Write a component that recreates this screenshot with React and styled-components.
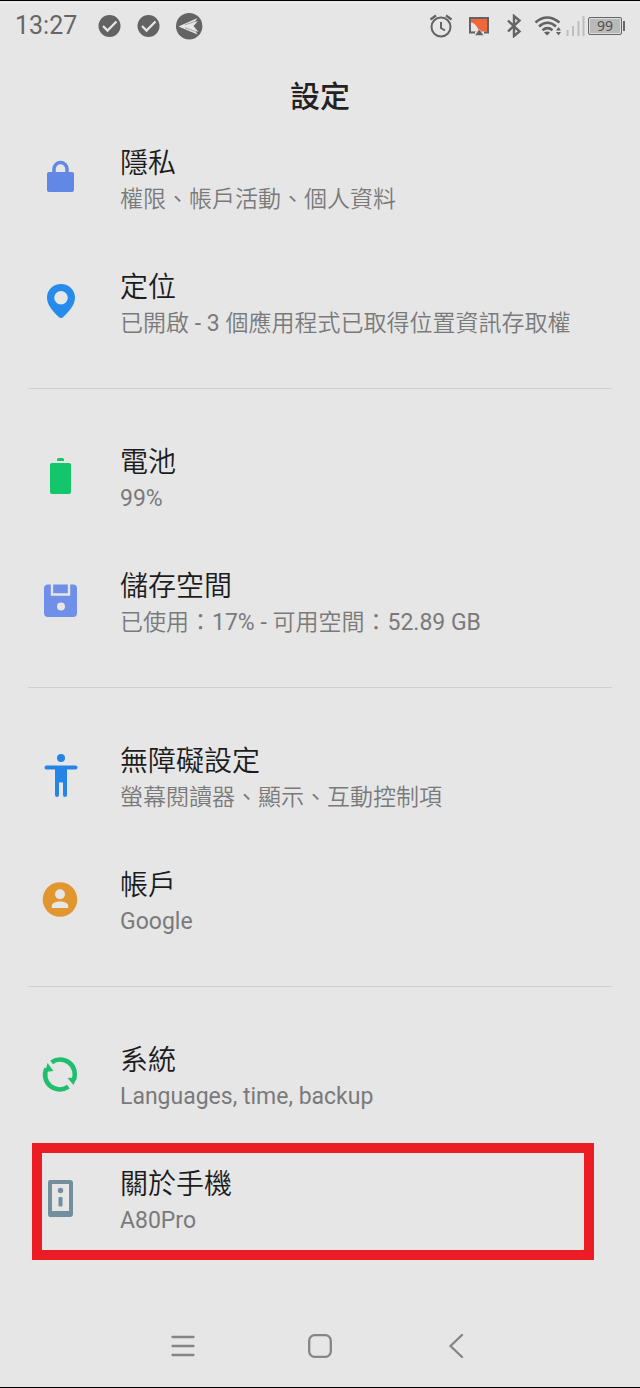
import React from "react";
import styled, { createGlobalStyle } from "styled-components";

const GlobalStyle = createGlobalStyle`
  * { box-sizing: border-box; }
  body {
    margin: 0;
    background: #e6e6e6;
    font-family: Roboto, "Noto Sans CJK TC", sans-serif;
  }
  svg { display: block; }
`;

const Screen = styled.div`
  min-height: 100vh;
  display: flex;
  flex-direction: column;
  background: #e6e6e6;
  border-top: 1px solid #000;
  border-bottom: 1px solid #000;
`;

const StatusBar = styled.header`
  height: 50px;
  padding: 0 15px;
  display: flex;
  align-items: center;
  justify-content: space-between;
  color: #666;
  box-shadow: inset 0 4px #eaeaea;
`;

const StatusGroup = styled.div`
  display: flex;
  align-items: center;
`;

const Clock = styled.time`
  width: 83px;
  font-size: 25px;
  line-height: 30px;
`;

const StatusIcon = styled.svg`
  width: ${(p) => p.$w}px;
  height: ${(p) => p.$h || p.$w}px;
  margin-right: ${(p) => p.$gap || 0}px;
`;

const BatteryLevel = styled.div`
  width: 34px;
  height: 18px;
  border: 1px solid #666;
  border-radius: 2px;
  background: #b9b9b9;
  box-shadow: inset 0 0 0 1px #dcdcdc;
  color: #505050;
  font-family: "Noto Sans", sans-serif;
  font-size: 14px;
  line-height: 16px;
  text-align: center;
`;

const BatteryTip = styled.span`
  width: 2px;
  height: 10px;
  margin-left: 1px;
  background: #666;
`;

const PageTitle = styled.h1`
  margin: 0;
  height: 64px;
  padding-top: 24px;
  color: #222;
  font-size: 30px;
  line-height: 44px;
  font-weight: 500;
  text-align: center;
`;

const Main = styled.main`
  flex: 1;
`;

const Group = styled.ul`
  list-style: none;
  margin: 0;
  padding: 0;

  & + & {
    margin-top: 25px;
    padding-top: 26px;
    position: relative;
  }

  & + &::before {
    content: "";
    position: absolute;
    top: 0;
    left: 28px;
    right: 28px;
    border-top: 1px solid #cfcfcf;
  }
`;

const Item = styled.li`
  position: relative;

  &::after {
    content: "";
    display: ${(p) => (p.$highlighted ? "block" : "none")};
    position: absolute;
    inset: 7px 46px 0 32px;
    border: 10px solid #eb1c24;
    pointer-events: none;
  }
`;

const ItemLink = styled.a`
  height: 124px;
  display: grid;
  grid-template-columns: 40px 1fr;
  column-gap: 40px;
  align-items: center;
  padding: 0 20px 0 40px;
  text-decoration: none;
  font-family: Roboto, "Noto Sans CJK TC DemiLight", "Noto Sans CJK TC", sans-serif;
`;

const ItemIcon = styled.svg`
  width: 40px;
  height: 48px;
`;

const ItemText = styled.span`
  padding-top: 8px;
`;

const Label = styled.span`
  display: block;
  color: #1c1c1c;
  font-size: 28px;
  line-height: 38px;
`;

const Summary = styled.span`
  display: block;
  color: #7a7a7a;
  font-size: 23px;
  line-height: 34px;
`;

const NavBar = styled.nav`
  height: 82px;
  padding: 0 115px;
  display: flex;
  align-items: center;
  justify-content: space-between;
`;

const NavButton = styled.button`
  width: 136px;
  height: 48px;
  padding: 0;
  border: 0;
  background: none;
  color: #858585;
  display: flex;
  align-items: center;
  justify-content: center;
`;

const bg = "#e6e6e6";

const icons = {
  lock: (
    <>
      <rect x="7" y="19" width="27" height="20" rx="2" fill="#6288e6" />
      <path d="M14 20v-4a6.500 6.500 0 0 1 13 0V20" fill="none" stroke="#6288e6" strokeWidth="3.500" />
    </>
  ),
  pin: (
    <path
      fill="#268bea"
      fillRule="evenodd"
      d="M21 7C13 7 7 13 7 20.500C7 29 14 35 18.500 39.800Q21 42.200 23.500 39.800C28 35 35 29 35 20.500C35 13 29 7 21 7ZM21 14a6.800 6.800 0 1 1 0 13.600a6.800 6.800 0 0 1 0-13.600Z"
    />
  ),
  battery: (
    <g fill="#14c66b">
      <path d="M17 9V7.500Q17 6 18.500 6h4Q24 6 24 7.500V9Z" />
      <rect x="10" y="11" width="21" height="31" rx="2" />
    </g>
  ),
  disk: (
    <>
      <rect x="4" y="8.500" width="33" height="32.500" rx="4" fill="#6f8fe8" />
      <path d="M12 8v10.500h17V8" fill="none" stroke={bg} strokeWidth="2.400" />
      <circle cx="21" cy="30.500" r="4" fill={bg} />
    </>
  ),
  person: (
    <g fill="#2585e6">
      <circle cx="21" cy="7" r="4" />
      <path d="M6.500 14.500h29a2 2 0 0 1 0 4H27V44a2 2 0 0 1-4 0V31.500h-4V44a2 2 0 0 1-4 0V18.500H6.500a2 2 0 0 1 0-4Z" />
    </g>
  ),
  account: (
    <>
      <circle cx="20" cy="24.500" r="17.300" fill="#e2962f" />
      <circle cx="20" cy="19.200" r="5" fill={bg} />
      <path d="M11.700 33v-2c0-6 16.600-6 16.600 0v2Z" fill={bg} />
    </>
  ),
  sync: (
    <>
      <path
        d="M11.600 12.300A14.700 14.700 0 0 1 33.900 29.500M28.400 36.700A14.700 14.700 0 0 1 6.500 18.500"
        fill="none"
        stroke="#20bf70"
        strokeWidth="4.600"
      />
      <path d="M7.500 13L13.500 21L5 22ZM27.500 28L37 27.500L33.500 35Z" fill="#20bf70" />
    </>
  ),
  phone: (
    <>
      <path
        fill="#738f9e"
        fillRule="evenodd"
        d="M10 6h20q3 0 3 3v31q0 3-3 3H10q-2 0-2-3V9q0-3 2-3ZM12 10v27h17V10Z"
      />
      <circle cx="20.500" cy="16.500" r="2.700" fill="#738f9e" />
      <rect x="18.500" y="23" width="4" height="9.500" rx="1" fill="#738f9e" />
    </>
  ),
};

const groups = [
  [
    { icon: "lock", label: "隱私", summary: "權限、帳戶活動、個人資料" },
    { icon: "pin", label: "定位", summary: "已開啟 - 3 個應用程式已取得位置資訊存取權" },
  ],
  [
    { icon: "battery", label: "電池", summary: "99%" },
    { icon: "disk", label: "儲存空間", summary: "已使用：17% - 可用空間：52.89 GB" },
  ],
  [
    { icon: "person", label: "無障礙設定", summary: "螢幕閱讀器、顯示、互動控制項" },
    { icon: "account", label: "帳戶", summary: "Google" },
  ],
  [
    { icon: "sync", label: "系統", summary: "Languages, time, backup" },
    { icon: "phone", label: "關於手機", summary: "A80Pro", highlighted: true },
  ],
];

function CheckBadge() {
  return (
    <StatusIcon $w={23} $gap={16} viewBox="0 0 23 23" aria-hidden="true">
      <circle cx="11.500" cy="11" r="11" fill="#636363" />
      <path d="M5 11l4.500 4.500L18.500 6.500" fill="none" stroke={bg} strokeWidth="2.300" />
    </StatusIcon>
  );
}

function Status() {
  return (
    <StatusBar>
      <StatusGroup>
        <Clock>13:27</Clock>
        <CheckBadge />
        <CheckBadge />
        <StatusIcon $w={27} viewBox="0 0 27 27" aria-hidden="true">
          <circle cx="13.200" cy="13.200" r="13.200" fill="#636363" />
          <path d="M2.500 13.500L21.500 5L18.500 9L22 8L17.500 13L22.500 19L19.500 18L21.500 21.500Z" fill={bg} />
          <path d="M9 11.800L19 8.500M9 14.700L19.500 18.500" stroke="#636363" strokeWidth="0.500" />
        </StatusIcon>
      </StatusGroup>
      <StatusGroup>
        <StatusIcon $w={24} $gap={15} viewBox="0 0 24 24" fill="none" stroke="#636363" aria-hidden="true">
          <circle cx="12" cy="13" r="9.500" strokeWidth="2" />
          <path d="M12 8v6l4 2.500" strokeWidth="2" />
          <path d="M1.500 5.500L7 1.500M17 1.500L22.500 5.500" strokeWidth="2.200" />
        </StatusIcon>
        <StatusIcon $w={22} $h={20} $gap={15} viewBox="0 0 22 20" aria-hidden="true">
          <path d="M2 2.500h18v13H2Z" fill="#f2673a" />
          <path d="M2 6C7 7 10 11 10.500 15.500H2Z" fill={bg} />
          <path d="M7 16.500H2V2h18v14.500h-4" fill="none" stroke="#636363" strokeWidth="2" />
          <path d="M11.300 13l4.500 6.500h-9Z" fill="#636363" stroke={bg} strokeWidth="0.500" />
        </StatusIcon>
        <StatusIcon $w={18} $h={24} $gap={11} viewBox="0 0 18 24" aria-hidden="true">
          <path d="M3 6.500L14.500 17.500L9 22V2L14.500 6.500L3 17.500" fill="none" stroke="#636363" strokeWidth="2.400" />
        </StatusIcon>
        <StatusIcon $w={28} $h={22} $gap={4} viewBox="0 0 28 22" fill="none" stroke="#636363" aria-hidden="true">
          <path d="M1.500 7.500Q13 -2.500 25.500 7.500M5 11.500Q13.500 4 22 11.500M8.500 15.200Q13.500 11 18.500 15.200" strokeWidth="2.600" />
          <path d="M10 17.500Q13.500 15.500 16 17.500L13.200 20.500Z" fill="#636363" stroke="none" />
          <path d="M24.500 12l2.500 3.500h-5ZM24.500 20.500l2.500-3.500h-5Z" fill="#636363" stroke="none" />
        </StatusIcon>
        <StatusIcon $w={19} $h={20} $gap={3} viewBox="0 0 19 20" aria-hidden="true">
          <path d="M1.500 20v-6M7 20V10M12.500 20V5M17.500 20V0" stroke="#bdbdbd" strokeWidth="2" />
        </StatusIcon>
        <BatteryLevel>99</BatteryLevel>
        <BatteryTip />
      </StatusGroup>
    </StatusBar>
  );
}

export default function App() {
  return (
    <Screen lang="zh-Hant">
      <GlobalStyle />
      <Status />
      <PageTitle>設定</PageTitle>
      <Main>
        {groups.map((items) => (
          <Group key={items[0].icon}>
            {items.map((item) => (
              <Item key={item.icon} $highlighted={item.highlighted}>
                <ItemLink href={`#${item.icon}`}>
                  <ItemIcon viewBox="0 0 40 48" aria-hidden="true">
                    {icons[item.icon]}
                  </ItemIcon>
                  <ItemText>
                    <Label>{item.label}</Label>
                    <Summary>{item.summary}</Summary>
                  </ItemText>
                </ItemLink>
              </Item>
            ))}
          </Group>
        ))}
      </Main>
      <NavBar aria-label="系統導覽">
        <NavButton aria-label="選單">
          <svg width="24" height="24" viewBox="0 0 24 24" fill="none" stroke="currentColor" strokeWidth="2.300" strokeLinecap="round">
            <path d="M1.500 3h21M1.500 12h21M1.500 21h21" />
          </svg>
        </NavButton>
        <NavButton aria-label="主畫面">
          <svg width="24" height="24" viewBox="0 0 24 24" fill="none" stroke="currentColor" strokeWidth="2.300">
            <rect x="1.200" y="1.200" width="21.600" height="21.600" rx="5.500" />
          </svg>
        </NavButton>
        <NavButton aria-label="返回">
          <svg width="24" height="24" viewBox="0 0 24 24" fill="none" stroke="currentColor" strokeWidth="2.300" strokeLinecap="round">
            <path d="M17 1L5.500 12l11.500 11" />
          </svg>
        </NavButton>
      </NavBar>
    </Screen>
  );
}
